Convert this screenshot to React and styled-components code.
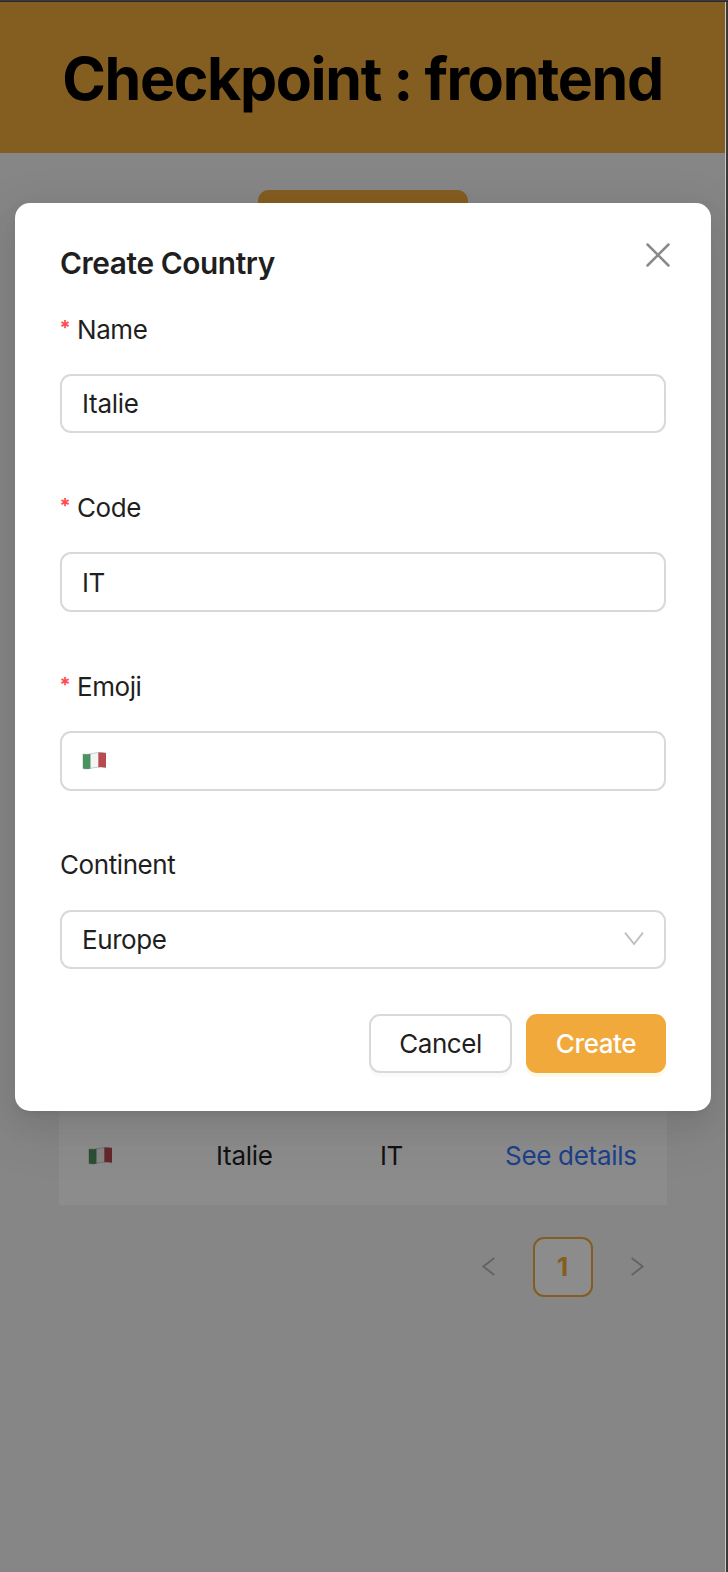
import React from 'react';
import styled, { createGlobalStyle } from 'styled-components';

const GlobalStyle = createGlobalStyle`
  * { box-sizing: border-box; }
  body { margin: 0; font-family: Inter, "Liberation Sans", sans-serif; font-size: 26px; color: #1f1f1f; }
`;
const Frame = styled.div`
  width: 728px; height: 1572px; overflow: hidden; position: relative;
  background: #3a3a38; border-top: 1px solid #3b3b3d; padding-top: 1px;
  box-shadow: inset 0 1px 0 #2a2a2c;
`;
const Page = styled.main`
  position: relative; width: 726px; height: 1570px; overflow: hidden;
  background: #f5f5f5; border-right: 1px solid #c9c9c7;
  display: flex; flex-direction: column; align-items: center;
`;
const Header = styled.header`
  width: 100%; height: 151px; padding-top: 3px; background: #f1a93b; flex: none;
  display: flex; align-items: center; justify-content: center;
`;
const Heading = styled.h1`
  margin: 0; font-size: 59px; line-height: 72px; font-weight: 700; color: #000;
  white-space: nowrap; letter-spacing: -1.35px;
`;
const AddButton = styled.button`
  width: 210px; height: 60px; margin-top: 37px; border: 0; border-radius: 11px; background: #f1a93b; flex: none;
`;
const Table = styled.div`
  width: 608px; height: 955px; background: #fff; flex: none;
  display: flex; flex-direction: column; justify-content: flex-end;
`;
const TableRow = styled.div`
  height: 99px; padding: 0 30px; display: grid; align-items: center;
  grid-template-columns: 127.5px 164px 125px 1fr;
  > svg { margin: 1px 0 0 -1px; }
`;
const Text = styled.span`
  white-space: nowrap; line-height: 41px; letter-spacing: ${p => p.$track ?? -0.42}px;
  color: ${p => p.$color || 'inherit'}; font-weight: ${p => p.$weight || 440};
`;
const Pagination = styled.nav`
  width: 608px; margin-top: 32px; padding-right: 23px; height: 60px;
  display: flex; justify-content: flex-end; align-items: center; gap: 38px;
  > svg { margin-bottom: 2px; }
`;
const CurrentPage = styled.span`
  width: 60px; height: 60px; border: 2px solid #f1a93b; border-radius: 11px; background: #fff;
  display: flex; align-items: center; justify-content: center; padding-bottom: 1px;
`;
const Mask = styled.div`
  position: absolute; inset: 0; background: rgba(0, 0, 0, 0.45);
`;
const Modal = styled.section`
  position: absolute; left: 15px; top: 201px; width: 696px; height: 907.5px;
  background: #fff; border-radius: 15px; padding: 37px 45px;
  box-shadow: 0 11px 30px rgba(0,0,0,.08), 0 6px 11px -7px rgba(0,0,0,.12), 0 17px 52px 15px rgba(0,0,0,.05);
`;
const Title = styled.h2`
  margin: 0; height: 47px; font-size: 29.8px; line-height: 47px; font-weight: 640;
  letter-spacing: -0.4px; white-space: nowrap;
`;
const Close = styled.button`
  position: absolute; right: 41px; top: 40px; width: 24px; height: 24px; padding: 0; border: 0; background: none;
  svg { display: block; }
`;
const Field = styled.div`
  height: 178.6px;
`;
const Label = styled.label`
  height: 86.9px; padding-top: 21.7px; display: flex; gap: 7px;
`;
const Star = styled.span`
  width: 10px; line-height: 38px; color: #ff4d4f; font-size: 20px; font-weight: 700;
  margin-left: -0.5px; margin-right: 0.5px;
`;
const Control = styled.div`
  height: 59.5px; border: 2px solid #d9d9d9; border-radius: 11px; padding: 0 20px;
  display: flex; align-items: center; justify-content: space-between;
`;
const Footer = styled.footer`
  display: flex; justify-content: flex-end; gap: 14px; margin-top: 12.6px;
`;
const Button = styled.button`
  width: ${p => p.$width}px; height: 59.5px; border-radius: 11px; padding: 0;
  border: 2px solid ${p => (p.$primary ? '#f1a93b' : '#d9d9d9')};
  background: ${p => (p.$primary ? '#f1a93b' : '#fff')};
  color: ${p => (p.$primary ? '#fff' : '#1f1f1f')};
  box-shadow: 0 4px 0 ${p => (p.$primary ? 'rgba(255,242,205,.45)' : 'rgba(0,0,0,.02)')};
  font: inherit;
`;

const Flag = () => (
  <svg width="24" height="18" viewBox="0 0 24 18">
    <path d="M.8 2 Q4.5 2.7 8.7 1.8 V16.4 Q4.5 17.4 .8 16.6Z" fill="#4c9160" />
    <path d="M8.7 1.8 Q12 .8 16.3 .5 V15.2 Q12 15.4 8.7 16.4Z" fill="#f4f4f4" />
    <path d="M16.3 .5 Q20 .1 24 1 V15.8 Q20 14.8 16.3 15.2Z" fill="#b94a50" />
    <path d="M.8 2 Q4.5 2.7 8.7 1.8 T16.3 .5 T24 1 M.8 16.6 Q4.5 17.4 8.7 16.4 T16.3 15.2 T24 15.8" fill="none" stroke="#777" strokeOpacity=".5" strokeWidth=".7" />
  </svg>
);
const Arrow = ({ next }) => (
  <svg width="13" height="19" viewBox="0 0 13 19" fill="none" stroke="#b4b4b4" strokeWidth="1.9">
    <path d={next ? 'M.7 1 L11.7 9.5 L.7 18' : 'M12.3 1 L1.3 9.5 L12.3 18'} />
  </svg>
);

const FormField = ({ label, required, children }) => (
  <Field>
    <Label>
      {required && <Star>*</Star>}
      <Text>{label}</Text>
    </Label>
    <Control>{children}</Control>
  </Field>
);

export default function App() {
  return (
    <Frame>
      <GlobalStyle />
      <Page>
        <Header><Heading>Checkpoint : frontend</Heading></Header>
        <AddButton />
        <Table>
          <TableRow>
            <Flag />
            <Text $track={-0.3}>Italie</Text>
            <Text>IT</Text>
            <Text $color="#3675fc" $track={-0.3}>See details</Text>
          </TableRow>
        </Table>
        <Pagination>
          <Arrow />
          <CurrentPage><Text $color="#f1a93b" $weight={700}>1</Text></CurrentPage>
          <Arrow next />
        </Pagination>
        <Mask />
        <Modal>
          <Title>Create Country</Title>
          <Close aria-label="Close">
            <svg width="24" height="24" viewBox="0 0 24 24" stroke="#8a8a8a" strokeWidth="2.5" strokeLinecap="round">
              <path d="M1.5 1.5 L22.5 22.5 M22.5 1.5 L1.5 22.5" />
            </svg>
          </Close>
          <FormField label="Name" required><Text $track={-0.3}>Italie</Text></FormField>
          <FormField label="Code" required><Text>IT</Text></FormField>
          <FormField label="Emoji" required><Flag /></FormField>
          <FormField label="Continent">
            <Text>Europe</Text>
            <svg width="20" height="14" viewBox="0 0 20 14" fill="none" stroke="#bfbfbf" strokeWidth="1.9">
              <path d="M1 .6 L10 12 L19 .6" />
            </svg>
          </FormField>
          <Footer>
            <Button $width={143}><Text>Cancel</Text></Button>
            <Button $width={140} $primary><Text $weight={500}>Create</Text></Button>
          </Footer>
        </Modal>
      </Page>
    </Frame>
  );
}
